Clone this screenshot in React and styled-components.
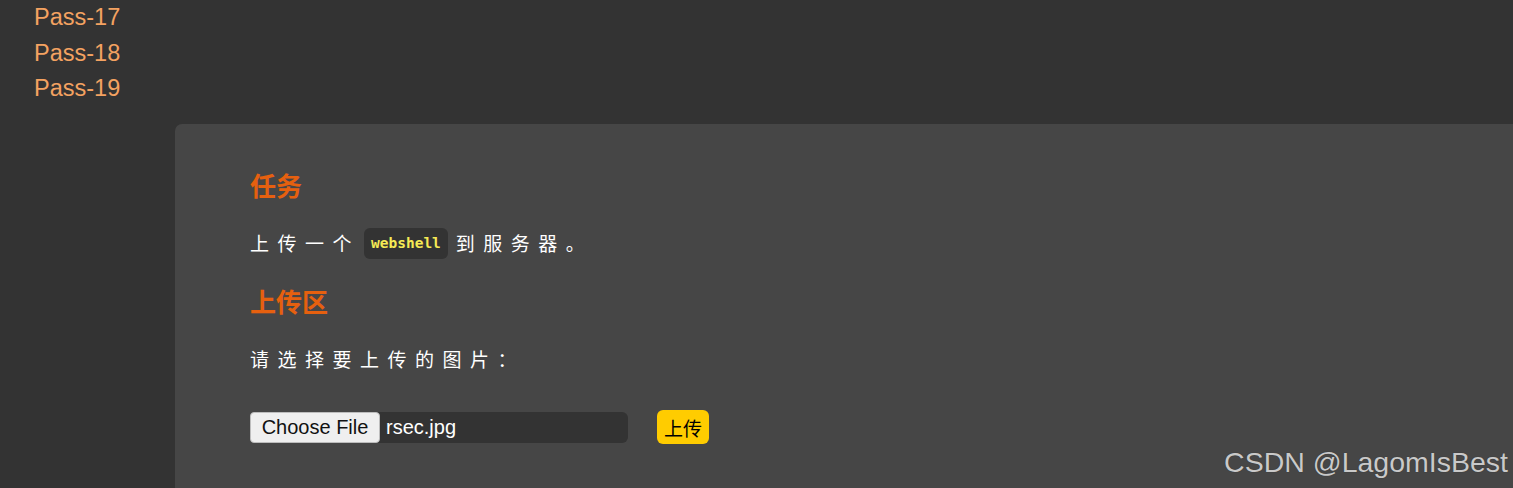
import styled, { createGlobalStyle } from "styled-components"

const links = ["Pass-17", "Pass-18", "Pass-19"]

export default function App(){
    return(
    <Page>
        <Global/>
        <Menu>
            {links.map((l) => <MenuLink key={l} href="#">{l}</MenuLink>)}
        </Menu>
        <Panel>
            <Heading>任务</Heading>
            <Text>上传一个<Code>webshell</Code>到服务器。</Text>
            <Heading>上传区</Heading>
            <Text>请选择要上传的图片：</Text>
            <Form>
                <FileBox>
                    <ChooseBtn type="button">Choose File</ChooseBtn>
                    <FileName>rsec.jpg</FileName>
                </FileBox>
                <Upload type="button">上传</Upload>
            </Form>
        </Panel>
        <Watermark>CSDN @LagomIsBest</Watermark>
    </Page>
    )
}

const Global = createGlobalStyle`
body{
    margin: 0;
    background: #333333;
    overflow: hidden;
}`

const Page = styled.div`
position: relative;
width: 1513px;
height: 488px;
overflow: hidden;
background: #333333;
font-family: "Liberation Sans", "Noto Sans CJK SC", sans-serif;
`

const Menu = styled.ul`
list-style: none;
margin: 0;
padding: 0 0 0 34px;
height: 124px;
`

const MenuLink = styled.a`
display: block;
font-size: 23.5px;
line-height: 35.5px;
color: #f4a261;
text-decoration: none;
`

const Panel = styled.div`
margin-left: 175px;
background: #464646;
border-radius: 7px 0 0 0;
padding: 43px 75px 60px;
min-height: 364px;
box-sizing: border-box;
`

const Heading = styled.h2`
margin: 0 0 24px;
font-family: "Noto Sans CJK SC", sans-serif;
font-size: 26px;
line-height: 36px;
font-weight: 700;
color: #e6600f;
`

const Text = styled.p`
margin: 0 0 24px;
font-family: "Noto Sans CJK SC", sans-serif;
font-size: 19px;
line-height: 32px;
letter-spacing: 8.5px;
color: #ffffff;
display: flex;
align-items: center;
`

const Code = styled.code`
display: inline-block;
background: #333333;
color: #f5ea55;
font-family: "DejaVu Sans Mono", monospace;
font-weight: 700;
font-size: 14.5px;
letter-spacing: 0;
line-height: 31px;
padding: 0 7px;
border-radius: 6px;
margin-right: 8px;
margin-left: 4px;
`

const Form = styled.div`
display: flex;
align-items: center;
gap: 29px;
margin-top: 35px;
`

const FileBox = styled.div`
display: flex;
width: 378px;
height: 31px;
background: #333333;
border-radius: 6px;
`

const ChooseBtn = styled.button`
width: 130px;
height: 31px;
background: #efefef;
border: 1px solid #bdbdbd;
border-radius: 4px;
font-family: "Liberation Sans", sans-serif;
font-size: 20px;
color: #111;
padding: 0;
`

const FileName = styled.span`
font-family: "Liberation Sans", sans-serif;
font-size: 20px;
line-height: 31px;
color: #ffffff;
margin-left: 6px;
`

const Upload = styled.button`
width: 52px;
height: 34px;
background: #ffcc00;
border: none;
border-radius: 6px;
font-family: "Noto Sans CJK SC", sans-serif;
font-size: 19px;
color: #000;
padding: 0;
`

const Watermark = styled.div`
position: absolute;
right: 5px;
bottom: 9px;
font-family: "Liberation Sans", sans-serif;
font-size: 28.5px;
color: #c9c9c9;
text-shadow: 0 0 1px rgba(0,0,0,0.4);
`
